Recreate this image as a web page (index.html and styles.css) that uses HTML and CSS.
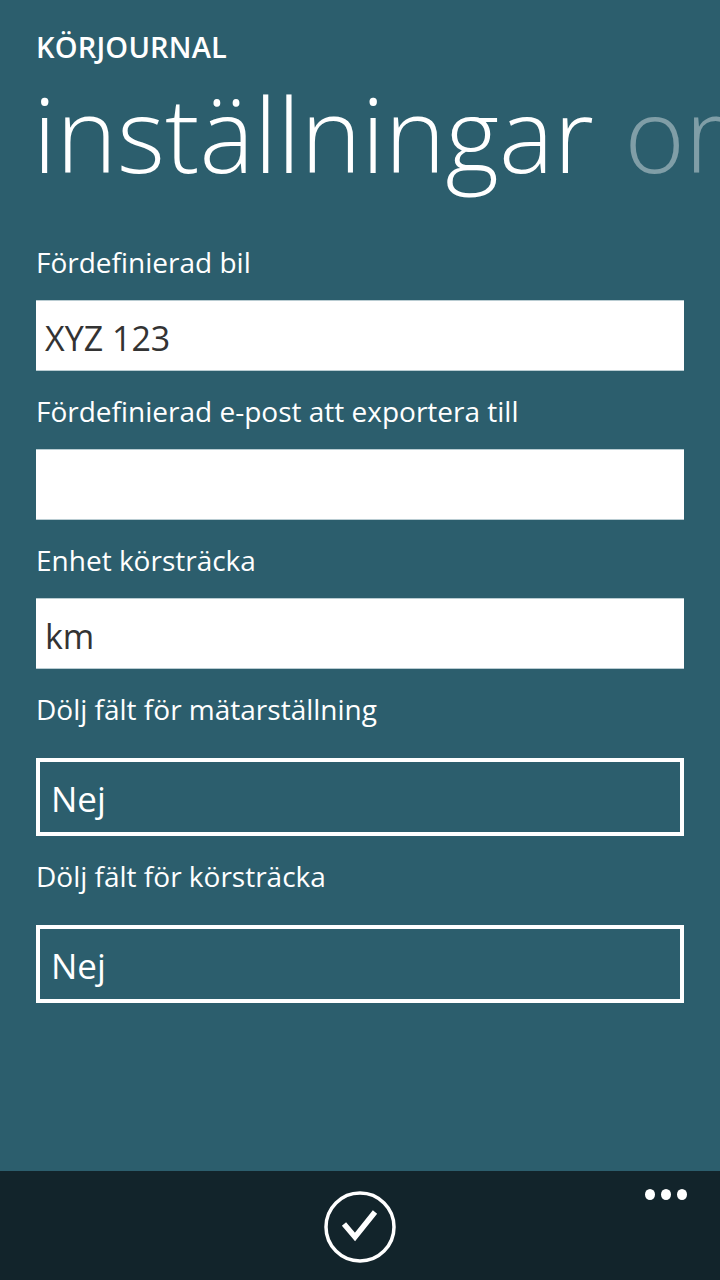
FILE: index.html
```html
<!DOCTYPE html>
<html lang="sv">
<head>
<meta charset="utf-8">
<title>Körjournal – inställningar</title>
<link rel="stylesheet" href="styles.css">
</head>
<body>
<div class="page">
  <header class="header">
    <div class="app-title">KÖRJOURNAL</div>
    <div class="pivot">
      <span class="pivot-item active">inställningar</span>
      <span class="pivot-item">om</span>
    </div>
  </header>
  <main class="form">
    <div class="field">
      <div class="label">Fördefinierad bil</div>
      <div class="textbox">XYZ 123</div>
    </div>
    <div class="field">
      <div class="label">Fördefinierad e-post att exportera till</div>
      <div class="textbox"></div>
    </div>
    <div class="field">
      <div class="label">Enhet körsträcka</div>
      <div class="textbox">km</div>
    </div>
    <div class="field">
      <div class="label">Dölj fält för mätarställning</div>
      <div class="picker">Nej</div>
    </div>
    <div class="field">
      <div class="label">Dölj fält för körsträcka</div>
      <div class="picker">Nej</div>
    </div>
  </main>
  <footer class="appbar">
    <div class="appbar-button">
      <svg width="74" height="74" viewBox="0 0 74 74">
        <circle cx="37" cy="37" r="34" fill="none" stroke="#fff" stroke-width="3.5"/>
        <path d="M21 34 L32 47 L52 22" fill="none" stroke="#fff" stroke-width="5.5" stroke-linecap="butt" stroke-linejoin="miter"/>
      </svg>
    </div>
    <div class="appbar-more"><span></span><span></span><span></span></div>
  </footer>
</div>
</body>
</html>
```

FILE: styles.css
```css
html, body {
  margin: 0;
  padding: 0;
}
body {
  background: #2c5e6d;
  font-family: "Open Sans", "Noto Sans", sans-serif;
  color: #fff;
  width: 720px;
  height: 1280px;
  overflow: hidden;
}
.page {
  display: flex;
  flex-direction: column;
  height: 1280px;
}
.header {
  padding-left: 36px;
  padding-top: 29px;
  overflow: hidden;
}
.app-title {
  font-size: 29px;
  font-weight: 600;
  line-height: 36px;
  letter-spacing: 0.2px;
}
.pivot {
  white-space: nowrap;
  font-size: 103px;
  font-weight: 300;
  line-height: 130px;
  margin-left: -3px;
  margin-top: 3px;
}
.pivot-item {
  margin-right: 4px;
}
.pivot-item:not(.active) {
  color: rgba(255, 255, 255, 0.4);
}
.form {
  flex: 1;
  padding: 46px 36px 0 36px;
  display: flex;
  flex-direction: column;
  gap: 22px;
}
.field {
  display: flex;
  flex-direction: column;
}
.label {
  font-size: 28px;
  line-height: 36px;
  height: 36px;
  white-space: nowrap;
}
.textbox {
  margin-top: 20px;
  height: 63px;
  background: #fff;
  border-top: 1px solid #b9ccd2;
  border-bottom: 1px solid #b9ccd2;
  color: #333;
  font-size: 34px;
  line-height: 63px;
  padding: 6px 0 0 9px;
}
.picker {
  margin-top: 31px;
  height: 66px;
  border: 4px solid #fff;
  font-size: 35px;
  line-height: 66px;
  padding: 4px 0 0 11px;
}
.appbar {
  height: 109px;
  background: #12242b;
  position: relative;
  display: flex;
  justify-content: center;
}
.appbar-button {
  margin-top: 19px;
  width: 74px;
  height: 74px;
}
.appbar-more {
  position: absolute;
  right: 33px;
  top: 18px;
  display: flex;
  gap: 6px;
}
.appbar-more span {
  width: 10px;
  height: 11px;
  border-radius: 50%;
  background: #fff;
}
```
